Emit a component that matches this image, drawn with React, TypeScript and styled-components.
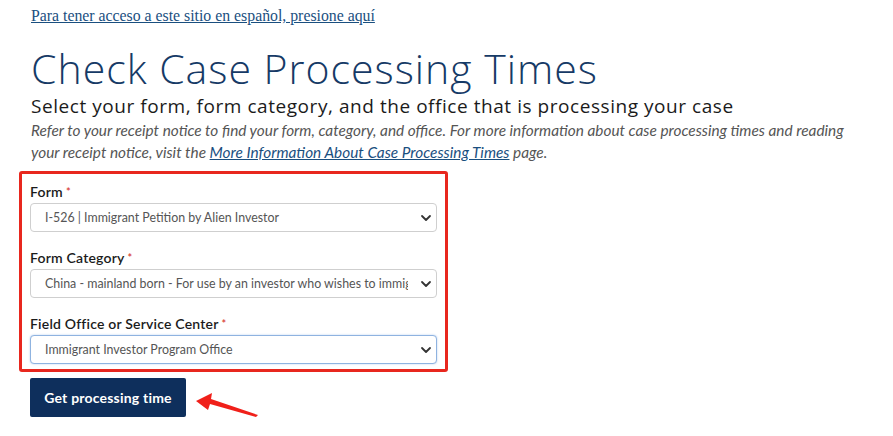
import React from "react";
import styled, { createGlobalStyle } from "styled-components";

const Global = createGlobalStyle`
  html, body { margin: 0; padding: 0; background: #ffffff; }
  body { font-family: "Lato", "Liberation Sans", sans-serif; }
`;

const Page = styled.main`
  position: relative;
  padding: 6px 0 0 31px;
  width: 893px;
  height: 436px;
  box-sizing: border-box;
  overflow: hidden;
`;

const LangLink = styled.a`
  display: block;
  font-family: "Liberation Serif", serif;
  font-size: 15.8px;
  line-height: 20px;
  color: #1a4f7f;
  text-decoration: underline;
`;

const Title = styled.h1`
  margin: 20px 0 0 0;
  font-family: "Open Sans", sans-serif;
  font-weight: 300;
  font-size: 41px;
  line-height: 44px;
  color: #163a66;
  letter-spacing: 1px;
`;

const Subtitle = styled.h2`
  margin: 4px 0 0 0;
  font-family: "Open Sans", sans-serif;
  font-weight: 400;
  font-size: 19px;
  line-height: 24px;
  color: #1b1b1b;
  letter-spacing: 0.55px;
`;

const Intro = styled.p`
  margin: 1px 0 0 0;
  width: 822px;
  font-family: "Lato", sans-serif;
  font-style: italic;
  font-weight: 400;
  font-size: 15.36px;
  line-height: 22px;
  color: #555555;
`;

const InlineLink = styled.a`
  color: #1a4f7f;
  text-decoration: underline;
`;

const Highlight = styled.div`
  margin: 8px 0 0 -12px;
  width: 429px;
  box-sizing: border-box;
  border: 3px solid #e8271e;
  border-radius: 3px;
  padding: 9px 8px 5px 8px;
  display: flex;
  flex-direction: column;
  gap: 17px;
`;

const Field = styled.div`
  display: flex;
  flex-direction: column;
  gap: 3px;
`;

const Label = styled.label`
  font-family: "Lato", sans-serif;
  font-weight: 600;
  font-size: 14px;
  line-height: 17px;
  color: #1b1b1b;
  letter-spacing: 0.2px;
`;

const Req = styled.span`
  color: #d83933;
  font-size: 11px;
  margin-left: 3px;
  vertical-align: top;
`;

const Select = styled.div<{ $focused?: boolean }>`
  height: 29px;
  box-sizing: border-box;
  border: 1px solid ${(p) => (p.$focused ? "#8fb3e0" : "#cfcfcf")};
  box-shadow: ${(p) => (p.$focused ? "0 0 2px rgba(80,140,220,0.45)" : "none")};
  border-radius: 4px;
  background: #fff;
  padding: 0 4px 0 14px;
  display: flex;
  align-items: center;
  gap: 12px;
`;

const Value = styled.span`
  flex: 1;
  min-width: 0;
  overflow: hidden;
  white-space: nowrap;
  font-family: "Lato", sans-serif;
  font-size: 12.4px;
  color: #555;
`;

const Chevron = styled.svg`
  flex: none;
`;

const Button = styled.button`
  display: block;
  margin: 6px 0 0 -1px;
  width: 156px;
  height: 39px;
  border: none;
  border-radius: 2px;
  background: #0e2f5c;
  color: #fff;
  font-family: "Lato", sans-serif;
  font-weight: 700;
  font-size: 14px;
  letter-spacing: 0.2px;
  cursor: pointer;
`;

const Arrow = styled.svg`
  position: absolute;
  left: 192px;
  top: 391px;
`;

const ChevronIcon = () => (
  <Chevron width="12" height="8" viewBox="0 0 12 8">
    <path d="M2 2 L6 6 L10 2" fill="none" stroke="#333" strokeWidth="1.8" strokeLinecap="round" strokeLinejoin="round" />
  </Chevron>
);

const fields = [
  { label: "Form", value: "I-526 | Immigrant Petition by Alien Investor" },
  { label: "Form Category", value: "China - mainland born - For use by an investor who wishes to immigrate" },
  { label: "Field Office or Service Center", value: "Immigrant Investor Program Office", focused: true },
];

export default function App() {
  return (
    <>
      <Global />
      <Page>
        <LangLink href="#">Para tener acceso a este sitio en español, presione aquí</LangLink>
        <Title>Check Case Processing Times</Title>
        <Subtitle>Select your form, form category, and the office that is processing your case</Subtitle>
        <Intro>
          Refer to your receipt notice to find your form, category, and office. For more information about case
          processing times and reading your receipt notice, visit the{" "}
          <InlineLink href="#">More Information About Case Processing Times</InlineLink> page.
        </Intro>
        <Highlight>
          {fields.map((f) => (
            <Field key={f.label}>
              <Label>
                {f.label}
                <Req>*</Req>
              </Label>
              <Select $focused={f.focused}>
                <Value>{f.value}</Value>
                <ChevronIcon />
              </Select>
            </Field>
          ))}
        </Highlight>
        <Button>Get processing time</Button>
        <Arrow width="70" height="28" viewBox="0 0 70 28">
          <path d="M4 10 L20 2 L19 8 L66 24 L64 26 L18 13 L16 19 Z" fill="#f0201a" />
        </Arrow>
      </Page>
    </>
  );
}
